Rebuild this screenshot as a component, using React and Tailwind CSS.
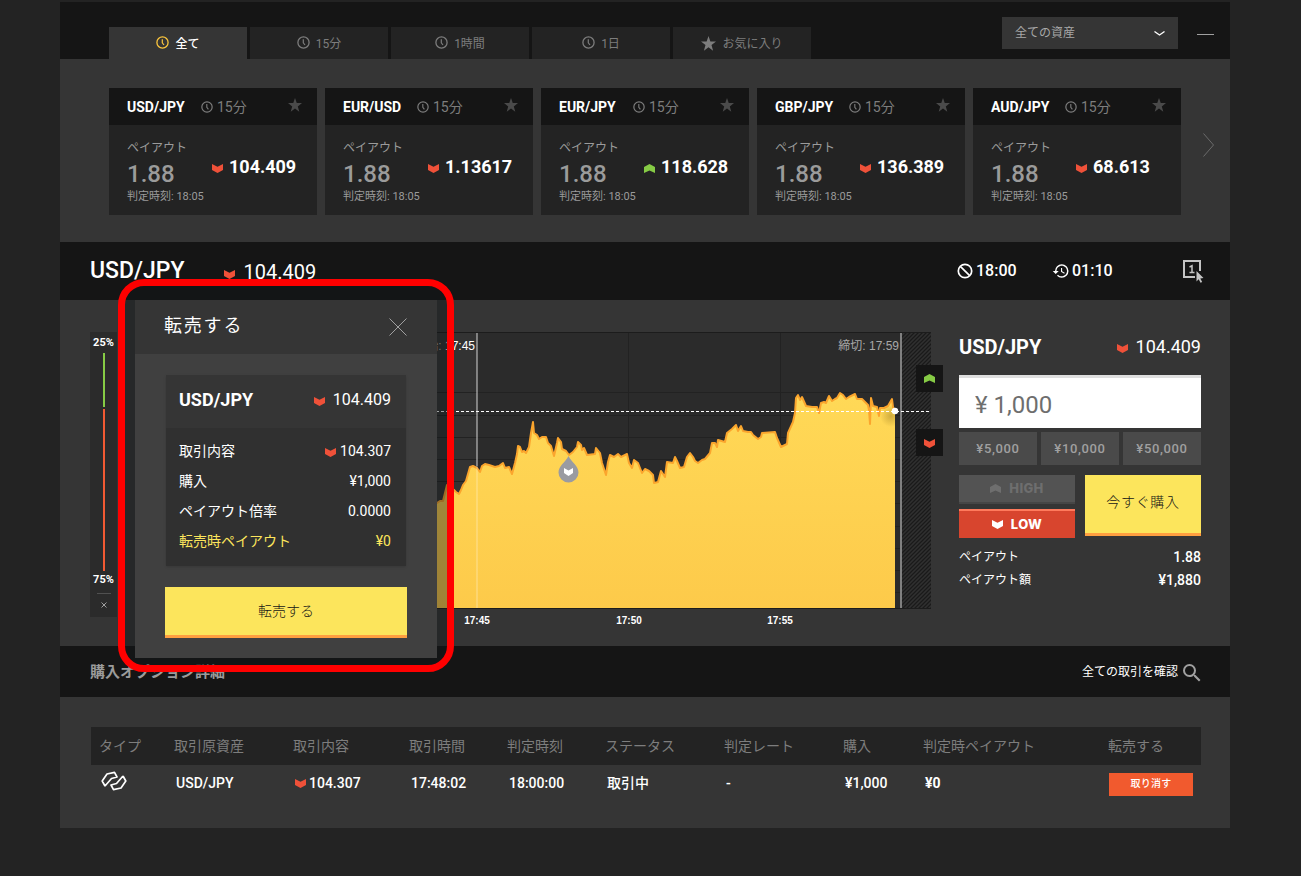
import React, { useState } from "react";
import { MdHistory, MdSearch } from "react-icons/md";

const tabs = [
  { id: "all", label: "全て", icon: "clock" },
  { id: "15m", label: "15分", icon: "clock" },
  { id: "1h", label: "1時間", icon: "clock" },
  { id: "1d", label: "1日", icon: "clock" },
  { id: "fav", label: "お気に入り", icon: "star" },
];

const assets = [
  { pair: "USD/JPY", rate: "104.409", up: false },
  { pair: "EUR/USD", rate: "1.13617", up: false },
  { pair: "EUR/JPY", rate: "118.628", up: true },
  { pair: "GBP/JPY", rate: "136.389", up: false },
  { pair: "AUD/JPY", rate: "68.613", up: false },
];

const columns = [
  { title: "タイプ", width: "w-[75px]" },
  { title: "取引原資産", width: "w-[119px]" },
  { title: "取引内容", width: "w-[116px]" },
  { title: "取引時間", width: "w-[98px]" },
  { title: "判定時刻", width: "w-[98px]" },
  { title: "ステータス", width: "w-[119px]" },
  { title: "判定レート", width: "w-[119px]" },
  { title: "購入", width: "w-[80px]" },
  { title: "判定時ペイアウト", width: "w-[185px]" },
  { title: "転売する", width: "w-[101px]" },
];

// Rate history, in chart units (800 x 276, origin top left)
const rates = [
  [0, 230], [30, 214], [60, 222], [90, 205], [120, 210], [150, 190], [180, 196], [210, 180],
  [240, 184], [270, 168], [290, 174], [306, 171], [309, 169], [312, 169], [314, 161], [316, 153],
  [321, 157], [323, 158], [325, 160], [328, 162], [330, 158], [332, 153], [335, 149], [337, 142],
  [339, 135], [342, 134], [346, 136], [349, 140], [351, 134], [354, 132], [358, 133], [364, 135],
  [368, 134], [372, 131], [374, 136], [378, 135], [381, 142], [384, 131], [386, 122], [387, 114],
  [389, 115], [391, 120], [393, 119], [395, 121], [398, 115], [400, 101], [402, 90], [403, 101],
  [406, 103], [408, 107], [411, 105], [415, 105], [417, 111], [420, 114], [423, 124], [426, 111],
  [427, 106], [430, 110], [431, 117], [435, 119], [438, 123], [442, 120], [446, 115], [447, 110],
  [450, 113], [451, 118], [453, 116], [456, 123], [464, 122], [465, 116], [469, 121], [471, 131],
  [475, 143], [477, 130], [479, 123], [483, 125], [487, 122], [490, 125], [496, 122], [498, 131],
  [501, 136], [503, 128], [507, 131], [511, 141], [514, 137], [518, 139], [522, 143], [523, 151],
  [527, 150], [530, 139], [534, 145], [536, 130], [542, 131], [544, 125], [546, 129], [549, 136],
  [553, 135], [556, 125], [559, 121], [562, 125], [564, 129], [567, 131], [571, 128], [574, 127],
  [579, 121], [581, 111], [584, 111], [586, 115], [587, 108], [594, 110], [596, 101], [601, 97],
  [605, 93], [607, 99], [610, 94], [612, 99], [617, 100], [620, 100], [622, 103], [627, 107],
  [630, 105], [631, 101], [644, 100], [646, 106], [650, 115], [656, 112], [657, 101], [662, 90],
  [664, 81], [665, 66], [667, 63], [669, 68], [671, 65], [675, 74], [681, 75], [686, 75],
  [688, 81], [690, 71], [693, 70], [695, 71], [698, 64], [701, 69], [704, 67], [706, 66],
  [709, 61], [712, 63], [715, 67], [718, 65], [724, 62], [726, 67], [731, 67], [735, 71],
  [737, 73], [738, 78], [739, 92], [740, 66], [742, 74], [746, 75], [748, 84], [749, 76],
  [753, 76], [757, 74], [761, 67], [762, 75], [764, 79],
];

const gridRows = [60, 83, 105, 127, 149, 171, 194, 216, 238, 260];
const linePath = "M" + rates.map(([x, y]) => `${x} ${y}`).join("L");

const Arrow = ({ up, className = "mt-[2px]", color }) => (
  <svg viewBox="0 0 11 9" className={`h-[9px] w-[11px] shrink-0 ${className}`} aria-hidden="true">
    <path
      d={up ? "M5.5 0L11 3v6L5.500 6.400 0 9V3z" : "M0 0l5.500 2.800L11 0v6L5.500 9 0 6z"}
      fill={color || (up ? "#86cb45" : "#ef5139")}
    />
  </svg>
);

const Clock = ({ className }) => (
  <svg viewBox="0 0 13 13" className={`shrink-0 ${className}`} fill="none" stroke="currentColor" aria-hidden="true">
    <circle cx="6.5" cy="6.5" r="5.600" strokeWidth="1.300" />
    <path d="M6.300 3.200v3.600l1.700 2.200" strokeWidth="1.200" />
  </svg>
);

const Star = ({ className }) => (
  <svg viewBox="0 0 14 14" className={`shrink-0 ${className}`} fill="currentColor" aria-hidden="true">
    <path d="M7 0l1.750 5.100H14L9.800 8.400l1.500 5.300L7 10.500l-4.300 3.200 1.500-5.300L0 5.100h5.250z" />
  </svg>
);

const AssetCard = ({ pair, rate, up }) => (
  <article className="flex-1 bg-[#232323]">
    <header className="flex h-[37px] items-center bg-[#151515] pl-[18px] pr-[15px]">
      <h3 className="w-[74px] text-sm font-bold text-white">{pair}</h3>
      <span className="flex items-center gap-1 text-sm text-[#7d7d7d]">
        <Clock className="h-3 w-3" /> 15分
      </span>
      <button aria-label="お気に入り" className="ml-auto mb-1 text-[#4a4a4a]">
        <Star className="h-[14px] w-[14px]" />
      </button>
    </header>
    <div className="flex h-[90px] justify-between pl-[18px] pr-[21px] pt-3">
      <div className="w-[84px] text-[#9b9b9b]">
        <p className="pt-px text-xs leading-5">ペイアウト</p>
        <p className="text-2xl leading-8 font-medium">1.88</p>
        <p className="text-[11px] leading-[14px] whitespace-nowrap">判定時刻: 18:05</p>
      </div>
      <p className="flex h-[60px] w-[84px] items-center gap-[6px] text-lg font-bold text-white">
        <Arrow up={up} />
        {rate}
      </p>
    </div>
  </article>
);

const Chart = () => (
  <div className="relative min-w-0 flex-1">
    <svg viewBox="0 0 800 300" preserveAspectRatio="xMaxYMin slice" className="block h-[300px] w-full overflow-hidden">
      <defs>
        <linearGradient id="area" x1="0" y1="0" x2="0" y2="1">
          <stop offset="0" stopColor="#ffd957" />
          <stop offset="1" stopColor="#fdca4a" />
        </linearGradient>
        <pattern id="hatch" width="4" height="4" patternUnits="userSpaceOnUse">
          <rect width="4" height="4" fill="#303030" />
          <path d="M-1 1l2-2M0 4l4-4M3 5l2-2" stroke="#1a1a1a" strokeWidth="1.300" />
        </pattern>
        <radialGradient id="glow">
          <stop offset="0" stopColor="#7a5c10" stopOpacity="0.350" />
          <stop offset="1" stopColor="#7a5c10" stopOpacity="0" />
        </radialGradient>
        <clipPath id="plot">
          <path d={`${linePath}V276H0z`} />
        </clipPath>
      </defs>

      <rect width="346" height="276" fill="#333333" />
      <rect x="346" width="424" height="276" fill="#2b2b2b" />
      <g stroke="#222222">
        {gridRows.map((y) => (
          <path key={y} d={`M0 ${y}.500H770`} />
        ))}
        <path d="M497.500 0V276M649.500 0V276" />
      </g>
      <rect x="770" width="30" height="276" fill="url(#hatch)" />
      <path d="M0 .5H800M0 276.500H800" stroke="#1c1c1c" />

      <path d={`${linePath}V276H0z`} fill="url(#area)" />
      <path d={linePath} fill="none" stroke="#fba52d" strokeWidth="2" strokeLinejoin="round" />
      <circle cx="760" cy="84" r="11" fill="url(#glow)" clipPath="url(#plot)" />

      <path d="M346 1V276" stroke="#ffffff" strokeOpacity="0.200" strokeWidth="2" />
      <path d="M346 1V134" stroke="#ffffff" strokeOpacity="0.250" strokeWidth="2" />
      <path d="M770 1V276" stroke="#808080" strokeWidth="2" />
      <path d="M0 79.500H800" stroke="#ffffff" strokeDasharray="3 2" />
      <circle cx="764" cy="79" r="3.200" fill="#ffffff" />

      {/* Entry marker */}
      <path d="M437.500 124c3 6 10 10 10 16.500a10 10 0 0 1-20 0c0-6.500 7-10.500 10-16.500z" fill="#9a9ba1" />
      <path d="M433 136l4.500 2.500 4.500-2.500v5l-4.500 3-4.500-3z" fill="#ffffff" />

      <g fontFamily="'Liberation Sans', 'Noto Sans CJK JP', sans-serif" fontSize="12" textAnchor="end" fill="#a8a8a8">
        <text x="344" y="18">
          開始: <tspan fill="#ffffff">17:45</tspan>
        </text>
        <text x="768" y="18">締切: 17:59</text>
      </g>
      <g fontFamily="'Liberation Sans', sans-serif" fontSize="10" fontWeight="700" textAnchor="middle" fill="#ffffff">
        <text x="346" y="292">17:45</text>
        <text x="498" y="292">17:50</text>
        <text x="649" y="292">17:55</text>
      </g>
    </svg>
    <button aria-label="High" className="absolute -right-3 top-[33px] flex h-[27px] w-[27px] items-center justify-center bg-[#151515]">
      <Arrow up className="" />
    </button>
    <button aria-label="Low" className="absolute -right-3 top-[97px] flex h-[27px] w-[27px] items-center justify-center bg-[#151515]">
      <Arrow />
    </button>
  </div>
);

const SellDialog = () => {
  const rows = [
    { label: "取引内容", value: "104.307", arrow: true },
    { label: "購入", value: "¥1,000" },
    { label: "ペイアウト倍率", value: "0.0000" },
    { label: "転売時ペイアウト", value: "¥0", highlight: true },
  ];

  return (
    <div className="absolute left-[58px] -top-[21px] z-10 w-[336px] rounded-[26px] border-[7px] border-[#ff0000] bg-[#11161a]/40 px-[10px] pt-[14px] pb-[7px]">
      <div role="dialog" aria-label="転売する" className="bg-[#404040] pb-5">
        <header className="flex h-[54px] items-center justify-between bg-[#353535] pl-[29px] pr-[30px]">
          <h2 className="pb-[2px] text-lg tracking-widest text-white">転売する</h2>
          <button aria-label="閉じる" className="text-[#a0a0a0]">
            <svg viewBox="0 0 18 18" className="h-[18px] w-[18px]" stroke="currentColor" aria-hidden="true">
              <path d="M.5 .5l17 17M17.500 .5l-17 17" />
            </svg>
          </button>
        </header>
        <div className="mx-[31px] mt-[21px] bg-[#303030] pb-[10px] shadow">
          <div className="mb-2 flex h-[53px] items-center justify-between bg-[#353535] pb-[3px] pl-[13px] pr-[15px] text-white">
            <h3 className="text-lg font-bold">USD/JPY</h3>
            <span className="flex items-center gap-2 text-base">
              <Arrow /> 104.409
            </span>
          </div>
          <dl>
            {rows.map((row) => (
              <div
                key={row.label}
                className={`flex h-[30px] items-center justify-between pl-[13px] pr-[15px] text-sm ${
                  row.highlight ? "text-[#fce55c]" : "text-white"
                }`}
              >
                <dt>{row.label}</dt>
                <dd className="flex items-center gap-1">
                  {row.arrow && <Arrow />}
                  {row.value}
                </dd>
              </div>
            ))}
          </dl>
        </div>
        <div className="mt-[21px] px-[30px]">
          <button className="h-[51px] w-full border-b-[3px] border-[#ff9f40] bg-[#fce55c] text-sm font-light text-[#151515]">
            転売する
          </button>
        </div>
      </div>
    </div>
  );
};

const OrderPanel = () => {
  const [amount, setAmount] = useState("¥ 1,000");

  return (
    <aside className="w-[242px] shrink-0 text-white">
      <div className="flex h-[30px] items-center justify-between">
        <h2 className="text-xl font-bold">USD/JPY</h2>
        <span className="flex items-center gap-2 text-lg">
          <Arrow /> 104.409
        </span>
      </div>
      <input
        type="text"
        aria-label="購入金額"
        value={amount}
        onChange={(e) => setAmount(e.target.value)}
        className="mt-[13px] block h-[53px] w-full border-t-[3px] border-[#dedede] bg-white px-4 pt-1 text-2xl text-[#6e6e6e] outline-none"
      />
      <div className="mt-1 grid grid-cols-3 gap-1">
        {["5,000", "10,000", "50,000"].map((value) => (
          <button
            key={value}
            onClick={() => setAmount(`¥ ${value}`)}
            className="h-[33px] bg-[#4a4a4a] text-[13px] font-medium tracking-wider text-[#a0a0a0]"
          >
            ¥{value}
          </button>
        ))}
      </div>
      <div className="mt-[10px] grid grid-cols-2 gap-[10px]">
        <div className="flex flex-col gap-[5px]">
          <button className="flex h-[29px] items-center justify-center gap-2 border-b-2 border-[#464646] bg-[#535353] font-[Inter] text-[13px] font-extrabold tracking-wide text-[#6e6e6e]">
            <Arrow up color="#6e6e6e" className="" /> HIGH
          </button>
          <button className="flex h-[29px] items-center justify-center gap-2 border-t-2 border-[#ff7a5c] bg-[#d8452e] font-[Inter] text-[13px] font-extrabold tracking-wide text-white">
            <Arrow color="#ffffff" className="" /> LOW
          </button>
        </div>
        <button className="h-[61px] border-b-[3px] border-[#ff9f40] bg-[#fce55c] pb-1 text-sm font-light tracking-wider text-[#151515]">
          今すぐ購入
        </button>
      </div>
      <dl className="mt-2 text-sm leading-[23px]">
        <div className="flex items-center justify-between">
          <dt className="text-xs leading-[23px]">ペイアウト</dt>
          <dd className="font-medium">1.88</dd>
        </div>
        <div className="flex items-center justify-between">
          <dt className="text-xs leading-[23px]">ペイアウト額</dt>
          <dd className="font-medium">¥1,880</dd>
        </div>
      </dl>
    </aside>
  );
};

const App = () => {
  const [activeTab, setActiveTab] = useState("all");

  return (
    <div className="min-h-screen bg-[#232323] pl-[60px] pr-[71px] pt-[2px] pb-12 font-[Roboto,'Noto_Sans_CJK_JP',sans-serif]">
      {/* Tabs */}
      <header className="flex h-[57px] items-end bg-[#151515] pl-[49px] pr-4">
        <nav className="flex gap-[3px]">
          {tabs.map((tab) => (
            <button
              key={tab.id}
              onClick={() => setActiveTab(tab.id)}
              className={`flex h-8 w-[138px] items-center justify-center gap-[6px] pt-[2px] text-xs ${
                tab.id === activeTab ? "bg-[#353535] font-medium text-white" : "bg-[#232323] text-[#7d7d7d]"
              }`}
            >
              {tab.icon === "star" ? (
                <Star className="mb-[2px] h-[15px] w-[15px]" />
              ) : (
                <Clock className={`mb-1 h-[13px] w-[13px] ${tab.id === activeTab ? "text-[#fcc63d]" : ""}`} />
              )}
              {tab.label}
            </button>
          ))}
        </nav>
        <div className="ml-auto mb-[10px] flex items-center gap-[19px]">
          <div className="relative">
            <select
              aria-label="資産"
              className="h-8 w-44 appearance-none bg-[#353535] pl-[13px] text-xs text-[#a8a8a8] outline-none"
            >
              <option>全ての資産</option>
            </select>
            <svg viewBox="0 0 11 5" className="pointer-events-none absolute right-[13px] top-[14px] h-[5px] w-[11px]" fill="none" stroke="#ffffff" strokeWidth="1.300">
              <path d="M.5 .5L5.500 4l5-3.500" />
            </svg>
          </div>
          <button aria-label="最小化" className="mt-[2px] w-[17px] border-t border-[#a0a0a0]"></button>
        </div>
      </header>

      {/* Assets */}
      <section className="flex h-[183px] items-start bg-[#353535] pl-[49px] pr-4 pt-[29px]">
        <div className="flex flex-1 gap-2">
          {assets.map((asset) => (
            <AssetCard key={asset.pair} {...asset} />
          ))}
        </div>
        <button aria-label="次へ" className="ml-[22px] mt-[45px] text-[#6b6b6b]">
          <svg viewBox="0 0 11 24" className="h-6 w-[11px]" fill="none" stroke="currentColor" aria-hidden="true">
            <path d="M.5 .5L10.500 12 .5 23.500" />
          </svg>
        </button>
      </section>

      {/* Selected pair */}
      <section className="flex h-[58px] items-center bg-[#151515] pl-[30px] pr-[26px] text-white">
        <h1 className="text-[23px] font-medium">USD/JPY</h1>
        <span className="ml-10 flex items-center gap-2 pt-[2px] text-xl">
          <Arrow className="mt-1" /> 104.409
        </span>
        <div className="ml-auto flex items-center text-base font-medium">
          <span className="flex w-[95px] items-center gap-[3px]">
            <svg viewBox="0 0 16 16" className="h-4 w-4" fill="none" stroke="currentColor" strokeWidth="1.700" aria-hidden="true">
              <circle cx="8" cy="8" r="6.700" />
              <path d="M3.300 3.300l9.400 9.400" />
            </svg>
            18:00
          </span>
          <span className="flex w-[130px] items-center gap-[2px]">
            <MdHistory className="h-[18px] w-[18px]" /> 01:10
          </span>
          <button aria-label="ワンクリック" className="text-[#c4c4c4]">
            <svg viewBox="0 0 22 24" className="h-6 w-[22px]" aria-hidden="true">
              <path d="M18 12V2H2v16h11" fill="none" stroke="currentColor" strokeWidth="2" />
              <path d="M7.500 8L10 6.800V14M7.500 13.600h5" fill="none" stroke="currentColor" strokeWidth="1.500" />
              <path d="M14.500 12l7 7-3.200.5 1.900 3.400-1.700.9-1.800-3.500-2.200 2.200z" fill="currentColor" />
            </svg>
          </button>
        </div>
      </section>

      {/* Chart and order form */}
      <section className="relative flex h-[346px] items-start bg-[#353535] pl-[30px] pr-[29px] pt-8">
        <div className="mr-5 flex h-[285px] w-[27px] shrink-0 flex-col items-center bg-[#2b2b2b] pt-1 text-[11px] font-bold text-white">
          <span className="leading-[14px]">25%</span>
          <span className="mt-[3px] h-[54px] w-[2px] bg-[#86cb45]"></span>
          <span className="mt-[2px] h-[162px] w-[2px] bg-[#f15a33]"></span>
          <span className="mt-[2px] leading-[14px]">75%</span>
          <span className="mt-[6px] w-[14px] border-t border-[#505050]"></span>
          <button aria-label="閉じる" className="mt-2 text-[#a0a0a0]">
            <svg viewBox="0 0 6 6" className="h-[6px] w-[6px]" stroke="currentColor" aria-hidden="true">
              <path d="M.5 .5l5 5M5.500 .5l-5 5" />
            </svg>
          </button>
        </div>
        <Chart />
        <div className="ml-7">
          <OrderPanel />
        </div>
        <SellDialog />
      </section>

      {/* Option list */}
      <section className="flex h-[51px] items-center justify-between bg-[#151515] pl-[30px] pr-[26px]">
        <h2 className="pt-[2px] text-[15px] font-bold text-[#9b9b9b]">購入オプション詳細</h2>
        <a href="#trades" className="flex items-center gap-[2px] text-xs text-white">
          全ての取引を確認 <MdSearch className="mt-[2px] h-6 w-6 text-[#a0a0a0]" />
        </a>
      </section>

      <section id="trades" className="h-[131px] bg-[#353535] pl-[31px] pr-[29px] pt-[30px]">
        <table className="w-full table-fixed text-left text-sm text-white">
          <thead>
            <tr className="h-[38px] bg-[#232323] text-[#7d7d7d]">
              {columns.map((col) => (
                <th key={col.title} className={`${col.width} whitespace-nowrap px-2 font-normal`}>
                  {col.title}
                </th>
              ))}
            </tr>
          </thead>
          <tbody>
            <tr className="h-[35px] font-medium">
              <td className="px-[10px]">
                <svg viewBox="0 0 26 20" className="mb-1 h-5 w-[26px]" fill="none" stroke="currentColor" strokeWidth="1.700" strokeLinejoin="round" role="img" aria-label="HighLow">
                  <path d="M4 15L1.200 10 6 3l7.500-1.600L16 6l-5.500 1.500L4 15" />
                  <path d="M22 5l2.800 5L20 17l-7.500 1.600L10 14l5.500-1.500L22 5" />
                </svg>
              </td>
              <td className="px-[10px]">USD/JPY</td>
              <td className="px-[10px]">
                <span className="flex items-center gap-[3px]">
                  <Arrow /> 104.307
                </span>
              </td>
              <td className="px-[10px]">17:48:02</td>
              <td className="px-[10px]">18:00:00</td>
              <td className="px-[10px]">取引中</td>
              <td className="px-[10px]">-</td>
              <td className="px-[10px]">¥1,000</td>
              <td className="px-[10px] font-bold">¥0</td>
              <td className="pl-[9px] pr-2 pt-1">
                <button className="block h-[23px] w-full bg-[#f15a2e] text-[10px] font-medium tracking-wide">取り消す</button>
              </td>
            </tr>
          </tbody>
        </table>
      </section>
    </div>
  );
};

export default App;
